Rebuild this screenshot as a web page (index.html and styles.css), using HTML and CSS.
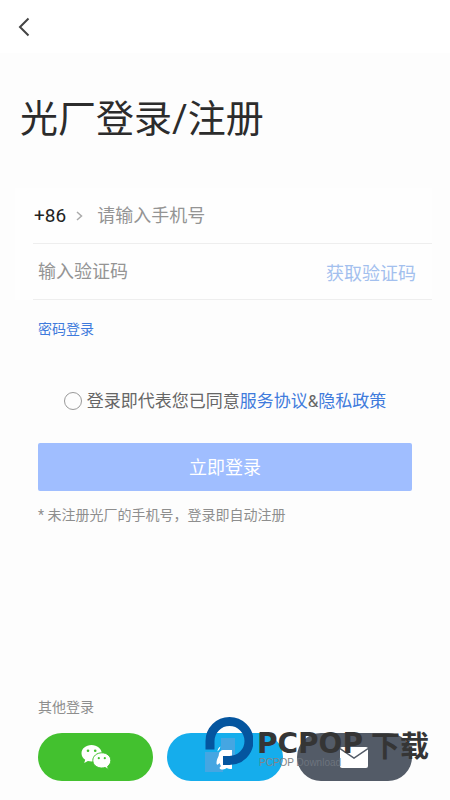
FILE: index.html
```html
<!DOCTYPE html>
<html lang="zh-CN">
<head>
<meta charset="utf-8">
<meta name="viewport" content="width=device-width, initial-scale=1">
<title>光厂登录/注册</title>
<link rel="stylesheet" href="styles.css">
</head>
<body>
<header class="topbar">
  <button class="back" type="button" aria-label="返回">
    <svg width="12" height="20" viewBox="0 0 12 20" fill="none" stroke="#444" stroke-width="2"><path d="M10.500 1.500 2 10l8.500 8.500"/></svg>
  </button>
</header>
<main class="page">
  <h1 class="title">光厂登录/注册</h1>
  <form class="login">
    <div class="fields">
      <div class="row">
        <button class="region" type="button">+86
          <svg width="7" height="10" viewBox="0 0 7 10" fill="none" stroke="#aaa" stroke-width="1.500"><path d="M1 1l4.500 4L1 9"/></svg>
        </button>
        <input class="field phone" type="tel" aria-label="手机号" placeholder="请输入手机号">
      </div>
      <div class="row">
        <input class="field code" type="text" aria-label="验证码" placeholder="输入验证码">
        <button class="send" type="button">获取验证码</button>
      </div>
    </div>
    <div class="content">
      <a class="link by-password" href="#password">密码登录</a>
      <div class="agree">
        <input class="tick" id="agree" type="radio">
        <div><label for="agree">登录即代表您已同意</label><a class="link" href="#terms">服务协议</a>&amp;<a class="link" href="#privacy">隐私政策</a></div>
      </div>
      <button class="submit" type="submit">立即登录</button>
      <p class="note">* 未注册光厂的手机号，登录即自动注册</p>
    </div>
  </form>
  <footer class="others">
    <p class="note">其他登录</p>
    <div class="pills">
      <button class="pill wechat" type="button" aria-label="微信登录">
        <svg width="30" height="26" viewBox="0 0 30 26">
          <path fill="#fff" d="M10.500 1C4.800 1 .5 4.600.5 9.300c0 2.700 1.400 4.900 3.700 6.400L3.200 19l3.700-2c1.200.3 2.400.5 3.600.5 5.700 0 10.200-3.600 10.200-8.200S16.200 1 10.500 1z"/>
          <path fill="#fff" stroke="#43c12f" d="M20.800 8.800c-5 0-9 3.300-9 7.600s4 7.600 9 7.600c1.200 0 2.300-.2 3.300-.5l3.400 1.900-.9-3c2-1.400 3.200-3.500 3.200-6 0-4.300-4-7.600-9-7.600z"/>
          <g fill="#43c12f"><circle cx="7" cy="6.800" r="1.300"/><circle cx="14.200" cy="6.800" r="1.300"/><circle cx="17.800" cy="14.200" r="1.100"/><circle cx="23.800" cy="14.200" r="1.100"/></g>
        </svg>
      </button>
      <button class="pill qq" type="button" aria-label="QQ登录">
        <svg width="40" height="40" viewBox="0 0 40 40">
          <path fill="#45a6e2" d="M0 15h18v20H0zM16 1h14v18H16z"/>
          <path fill="#fff" d="M15.500 9.500c-1.800.8-3 2.800-3 5l2.200-2.600zM27 13h-8c-3.500 0-5 2-5.200 5-.2 2-2.300 4-2.300 8.500 0 1.300 1 1.500 2 .6l1.300-1.100c.1 1.400.6 2.400 1.400 3.300-1.700.6-2 2-1 2.600 2.800 1 5 .4 6.500-.9 1.800 1.100 4 1.400 5.300.7z"/>
        </svg>
      </button>
      <button class="pill mail" type="button" aria-label="邮箱登录">
        <svg width="28" height="22" viewBox="0 0 28 22">
          <rect width="28" height="21" y="1" rx="2" fill="#fff"/>
          <path d="M0 2.500 14 12 28 2.500" fill="none" stroke="#535b67" stroke-width="1.500"/>
        </svg>
      </button>
    </div>
    <div class="mark">
      <svg width="48" height="48" viewBox="0 0 48 48">
        <path d="M5 32.500V24a19.500 19.500 0 1 1 19.500 19.500H18" fill="none" stroke="#04559f" stroke-width="9"/>
      </svg>
      <div class="mark-text">
        <div class="mark-name">PCPOP<span class="mark-cn">下载</span></div>
        <div class="mark-sub">PCPOP <span class="faint">Download</span></div>
      </div>
    </div>
  </footer>
</main>
</body>
</html>
```
FILE: styles.css
```css
* {
  box-sizing: border-box;
}

body {
  margin: 0;
  min-height: 100vh;
  display: flex;
  flex-direction: column;
  background: #fdfdfd;
  color: #666;
  font-family: Roboto, "Noto Sans CJK SC", sans-serif;
}

button,
input {
  margin: 0;
  padding: 0;
  border: 0;
  background: none;
  font: inherit;
}

h1,
p {
  margin: 0;
}

.topbar {
  display: flex;
  align-items: center;
  height: 53px;
  padding: 0 18px;
  background: #fff;
}

.back {
  display: flex;
}

.page {
  flex: 1;
  display: flex;
  flex-direction: column;
}

.title {
  padding: 38px 20px 0;
  color: #2c2c2c;
  font-size: 38px;
  font-weight: 400;
  line-height: 56px;
}

.fields {
  margin: 41px 18px 0 15px;
  padding-left: 18px;
  background: #fefefe;
}

.row {
  display: flex;
  align-items: center;
  height: 56px;
  border-bottom: 1px solid #eee;
  font-size: 18px;
}

.region {
  display: flex;
  align-items: center;
  gap: 10px;
  padding-left: 1px;
  color: #222;
  font-size: 19px;
}

.field {
  flex: 1;
  min-width: 0;
  height: 54px;
  outline: 0;
  color: #222;
}

.field::placeholder {
  color: #949494;
  opacity: 1;
}

.phone {
  margin-left: 14px;
}

.code {
  padding-left: 5px;
}

.send {
  padding-right: 16px;
  color: #a3c0ee;
}

.content {
  display: flex;
  flex-direction: column;
  padding: 18px 38px 0;
}

.link {
  color: #3f7bdc;
  text-decoration: none;
}

.by-password {
  align-self: flex-start;
  font-size: 14px;
  line-height: 22px;
}

.agree {
  display: flex;
  align-items: center;
  justify-content: center;
  gap: 5px;
  margin: 48px -10px 0;
  font-size: 17px;
  line-height: 26px;
}

.tick {
  appearance: none;
  width: 18px;
  height: 18px;
  border: 1px solid #999;
  border-radius: 50%;
}

.tick:checked {
  background: #3f7bdc;
}

.submit {
  height: 48px;
  margin: 29px 0 13px;
  padding-bottom: 3px;
  border-radius: 2px;
  background: #a0beff;
  color: #fff;
  font-size: 18px;
}

.note {
  color: #8e8e8e;
  font-size: 14px;
  line-height: 22px;
}

.others {
  position: relative;
  margin-top: auto;
  padding: 0 38px 19px;
}

.pills {
  display: flex;
  gap: 14px;
  margin-top: 15px;
}

.pill {
  flex: 1;
  display: flex;
  align-items: center;
  justify-content: center;
  height: 48px;
  border-radius: 24px;
}

.wechat {
  background: #43c12f;
}

.qq {
  background: #15adec;
}

.mail {
  background: #535b67;
}

.mark {
  position: absolute;
  left: calc(50% - 20px);
  bottom: 32px;
  display: flex;
  gap: 4px;
  white-space: nowrap;
  pointer-events: none;
}

.mark-text {
  padding-top: 14px;
}

.mark-name {
  display: flex;
  align-items: center;
  height: 26px;
  color: #353535;
  font-family: "DejaVu Sans", sans-serif;
  font-size: 28px;
  font-weight: 700;
  line-height: 26px;
}

.mark-cn {
  margin-left: 8px;
  font-family: "Noto Sans CJK SC", sans-serif;
  font-size: 29px;
}

.mark-sub {
  padding: 1px 0 0 2px;
  color: #808488;
  font-family: "Liberation Sans", sans-serif;
  font-size: 10px;
  line-height: 10px;
}

.faint {
  color: #6d747e;
}
```
